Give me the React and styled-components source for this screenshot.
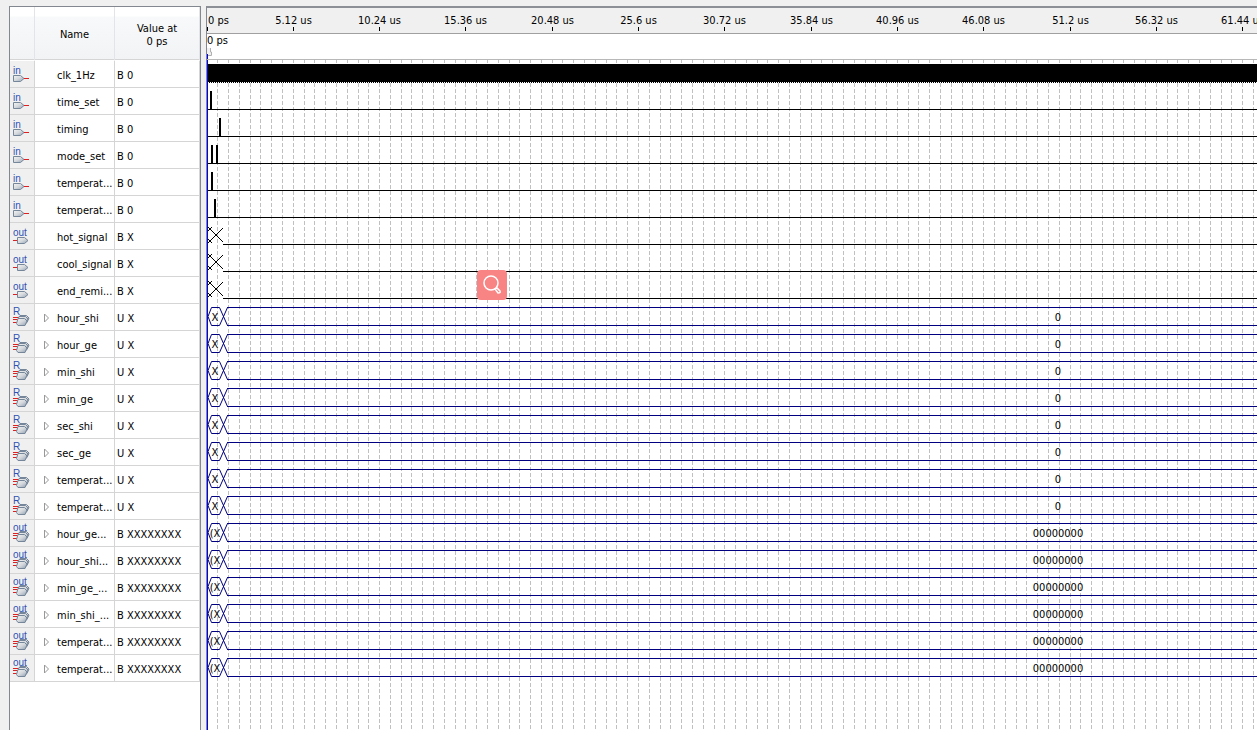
import React from "react";
import styled, { createGlobalStyle } from "styled-components";

const GlobalStyle = createGlobalStyle`
  body {
    margin: 0;
    background-color: #f0f0f0;
  }
`;

const FONT = `"DejaVu Sans Condensed", "DejaVu Sans", sans-serif`;

// distance between two labelled ticks, in pixels
const TICK = 86.3;
const GRID_STEP = TICK / 8;
const VALUE_X = 851;

const signals = [
  { name: "clk_1Hz", value: "B 0", icon: "in", wave: "clock" },
  { name: "time_set", value: "B 0", icon: "in", wave: "pulse", pulses: [3] },
  { name: "timing", value: "B 0", icon: "in", wave: "pulse", pulses: [12] },
  { name: "mode_set", value: "B 0", icon: "in", wave: "pulse", pulses: [4, 9] },
  { name: "temperat...", value: "B 0", icon: "in", wave: "pulse", pulses: [4] },
  { name: "temperat...", value: "B 0", icon: "in", wave: "pulse", pulses: [7] },
  { name: "hot_signal", value: "B X", icon: "out", wave: "unknown" },
  { name: "cool_signal", value: "B X", icon: "out", wave: "unknown" },
  { name: "end_remi...", value: "B X", icon: "out", wave: "unknown" },
  { name: "hour_shi", value: "U X", icon: "R", wave: "bus", data: "0" },
  { name: "hour_ge", value: "U X", icon: "R", wave: "bus", data: "0" },
  { name: "min_shi", value: "U X", icon: "R", wave: "bus", data: "0" },
  { name: "min_ge", value: "U X", icon: "R", wave: "bus", data: "0" },
  { name: "sec_shi", value: "U X", icon: "R", wave: "bus", data: "0" },
  { name: "sec_ge", value: "U X", icon: "R", wave: "bus", data: "0" },
  { name: "temperat...", value: "U X", icon: "R", wave: "bus", data: "0" },
  { name: "temperat...", value: "U X", icon: "R", wave: "bus", data: "0" },
  { name: "hour_ge...", value: "B XXXXXXXX", icon: "outBus", wave: "bus", data: "00000000" },
  { name: "hour_shi...", value: "B XXXXXXXX", icon: "outBus", wave: "bus", data: "00000000" },
  { name: "min_ge_...", value: "B XXXXXXXX", icon: "outBus", wave: "bus", data: "00000000" },
  { name: "min_shi_...", value: "B XXXXXXXX", icon: "outBus", wave: "bus", data: "00000000" },
  { name: "temperat...", value: "B XXXXXXXX", icon: "outBus", wave: "bus", data: "00000000" },
  { name: "temperat...", value: "B XXXXXXXX", icon: "outBus", wave: "bus", data: "00000000" },
];

const ticks = [
  "5.12 us", "10.24 us", "15.36 us", "20.48 us", "25.6 us", "30.72 us",
  "35.84 us", "40.96 us", "46.08 us", "51.2 us", "56.32 us", "61.44 us",
];

const Page = styled.div`
  display: flex;
  gap: 5px;
  min-height: 100vh;
  box-sizing: border-box;
  padding: 6px 0 0 9px;
  overflow: hidden;
  color: #000;
  font-family: ${FONT};
  font-size: 11px;
  line-height: 13px;
`;

const SignalPanel = styled.section`
  flex: none;
  border: 1px solid #828790;
  border-bottom: none;
  background-color: #fff;
`;

const SignalTable = styled.table`
  table-layout: fixed;
  width: 190px;
  border-collapse: separate;
  border-spacing: 0;
`;

const HeadCell = styled.th`
  box-sizing: border-box;
  width: ${(props) => props.$width};
  height: 54px;
  padding: 2px 0 0;
  border-right: 1px solid #e2e4e8;
  border-bottom: 1px solid #fff;
  background: linear-gradient(#fff 0 9px, #f8f9fa 10px, #f2f3f5);
  box-shadow: inset 0 -1px #d5d5d5;
  font-weight: normal;
  text-align: center;
`;

const Cell = styled.td`
  box-sizing: border-box;
  height: 27px;
  padding: 2px 0 0 2px;
  border-right: 1px solid #d5d5d5;
  border-bottom: 1px solid #d5d5d5;
  white-space: nowrap;
`;

const IconCell = styled(Cell)`
  padding: 0;
  background-color: #f0f0f0;
`;

const NameBox = styled.div`
  display: flex;
  align-items: center;
`;

const ExpandButton = styled.button`
  display: flex;
  width: 20px;
  height: 13px;
  padding: 1px 0 0 6px;
  border: none;
  background: none;
`;

const NoExpand = styled.span`
  width: 20px;
`;

const WavePanel = styled.section`
  flex: 1;
  min-width: 0;
  display: flex;
  flex-direction: column;
  border-top: 2px solid #8c9096;
  border-left: 1px solid #828790;
  background-color: #fff;
`;

const Ruler = styled.div`
  height: 25px;
  border-bottom: 1px solid #a0a0a0;
  background-color: #f0f0f0;
`;

const CursorBar = styled.div`
  height: 25px;
  border-bottom: 1px solid #b8b8b8;
`;

const WaveArea = styled.div`
  position: relative;
  flex: 1;
  padding-top: 1px;
`;

const Drawing = styled.svg`
  display: block;
  width: 100%;
  height: ${(props) => props.$height || "100%"};
  overflow: hidden;
  font-family: ${FONT};
  font-size: 11px;
`;

const GridLayer = styled(Drawing)`
  position: absolute;
  inset: 0;
  pointer-events: none;
`;

const WaveRows = styled.div`
  position: relative;
`;

const SearchButton = styled.button`
  position: absolute;
  top: 210px;
  left: 270px;
  width: 30px;
  height: 30px;
  padding: 0;
  border: none;
  border-radius: 4px;
  background-color: #f98484;
`;

const IconSvg = styled.svg`
  display: block;
  font-family: "Liberation Sans", sans-serif;
  font-size: 10px;
`;

const Tag = ({ x, y, d }) => (
  <path
    transform={`translate(${x} ${y})`}
    d={d}
    fill="url(#tag)"
    stroke="#75869a"
  />
);

const PinIcon = ({ type }) => {
  const label = type === "outBus" ? "out" : type;
  const single = "M.5.5H7.5L11 3.5 7.5 6.5H.5z";
  const stacked = "M2 .5H8.5L11 3 9 7.5H2L.5 5.5z";
  return (
    <IconSvg width="24" height="26" aria-hidden="true">
      {type === "in" && (
        <>
          <Tag x={3} y={14} d={single} />
          <path d="M14 17.5h5" stroke="#e02020" />
        </>
      )}
      {type === "out" && (
        <>
          <path d="M3 17.5h4" stroke="#e02020" />
          <Tag x={7} y={14} d={single} />
        </>
      )}
      {(type === "R" || type === "outBus") && (
        <>
          <path d="M3 13.5h6M3 15.5h5M3 18.5h4" stroke="#e02020" />
          <Tag x={8} y={11} d={stacked} />
          <Tag x={7} y={12} d={stacked} />
          <Tag x={6} y={14} d={stacked} />
        </>
      )}
      <text x="3" y={type === "in" || type === "out" ? 13 : 11} fill="#3152b0">
        {label}
      </text>
    </IconSvg>
  );
};

const Wave = ({ signal }) => (
  <Drawing $height="27px" stroke="#000" shapeRendering="crispEdges">
    {signal.wave === "clock" && (
      <>
        <rect y="3" width="100%" height="18" stroke="none" fill="#000" />
        <line y1="21.5" x2="100%" y2="21.5" strokeDasharray="1 1" />
      </>
    )}
    {signal.wave === "pulse" && (
      <>
        <line y1="21.5" x2="100%" y2="21.5" />
        {signal.pulses.map((x) => (
          <line key={x} x1={x + 1} x2={x + 1} y1="3" y2="21" strokeWidth="2" />
        ))}
      </>
    )}
    {signal.wave === "unknown" && (
      <>
        <path d="M1 4L16 19M1 20L16 5M1 8L5 4M1 16L5 20" fill="none" />
        <line x1="16" y1="21.5" x2="100%" y2="21.5" />
      </>
    )}
    {signal.wave === "bus" && (
      <>
        <g stroke="#000080" fill="none">
          <path
            d="M1 12.5L4.5 3.5H12.5L20.5 21.5M1 12.5L4.5 21.5H12.5L20.5 3.5"
            shapeRendering="auto"
          />
          <line x1="20" y1="3.5" x2="100%" y2="3.5" />
          <line x1="20" y1="21.5" x2="100%" y2="21.5" />
        </g>
        <g stroke="none" textAnchor="middle">
          <text x="8" y="17">{signal.data === "0" ? "X" : "(X"}</text>
          <text x={VALUE_X} y="17">{signal.data}</text>
        </g>
      </>
    )}
  </Drawing>
);

const Grid = () => (
  <GridLayer stroke="#c0c0c0" strokeDasharray="4 2">
    {Array.from({ length: 360 }, (_, i) => {
      const x = Math.floor((i + 1) * GRID_STEP) + 0.5;
      return <line key={i} x1={x} x2={x} y1="-1" y2="100%" />;
    })}
  </GridLayer>
);

const App = () => {
  return (
    <Page>
      <GlobalStyle />
      <SignalPanel>
        <SignalTable>
          <thead>
            <tr>
              <HeadCell $width="25px" />
              <HeadCell $width="80px">Name</HeadCell>
              <HeadCell $width="85px">
                Value at
                <br />0 ps
              </HeadCell>
            </tr>
          </thead>
          <tbody>
            {signals.map((signal, index) => (
              <tr key={index}>
                <IconCell>
                  <PinIcon type={signal.icon} />
                </IconCell>
                <Cell>
                  <NameBox>
                    {signal.wave === "bus" ? (
                      <ExpandButton aria-label={`Expand ${signal.name}`}>
                        <svg width="7" height="10">
                          <path d="M1.5 1v8L5.5 5z" fill="#fff" stroke="#989898" />
                        </svg>
                      </ExpandButton>
                    ) : (
                      <NoExpand />
                    )}
                    {signal.name}
                  </NameBox>
                </Cell>
                <Cell>{signal.value}</Cell>
              </tr>
            ))}
          </tbody>
        </SignalTable>
      </SignalPanel>

      <WavePanel>
        <Ruler>
          <Drawing textAnchor="middle">
            <defs>
              <linearGradient id="tag" x2="1" y2="1">
                <stop offset="0" stopColor="#f4f4f4" />
                <stop offset="0.5" stopColor="#d4d8dc" />
                <stop offset="1" stopColor="#8c9cb0" />
              </linearGradient>
            </defs>
            <text x="1" y="16" textAnchor="start">0 ps</text>
            <path d="M.5 19v4" stroke="#000" />
            {ticks.map((label, index) => {
              const x = Math.floor((index + 1) * TICK) + 0.5;
              return (
                <g key={label}>
                  <text x={x} y="16">{label}</text>
                  <path d={`M${x} 19v4`} stroke="#000" />
                </g>
              );
            })}
          </Drawing>
        </Ruler>
        <CursorBar>
          <Drawing>
            <text x="0" y="10">0 ps</text>
            <path d="M0 14h3v4h2v3H0z" fill="#f0f0f0" />
            <path d="M3.5 14v4h1v3.5H0" fill="none" stroke="#b0b0b0" />
            <path d="M.5 20v5" stroke="#0000ff" />
          </Drawing>
        </CursorBar>
        <WaveArea>
          <Grid />
          <WaveRows>
            {signals.map((signal, index) => (
              <Wave key={index} signal={signal} />
            ))}
          </WaveRows>
          <GridLayer>
            <line x1="0.5" x2="0.5" y1="0" y2="100%" stroke="#0000ff" />
          </GridLayer>
          <SearchButton aria-label="Search">
            <svg width="30" height="30" fill="none" stroke="#fff">
              <circle cx="14" cy="13" r="7" strokeWidth="1.5" />
              <path d="M18 19l2-1 3 3q1 2-2 2z" strokeWidth="1.5" />
            </svg>
          </SearchButton>
        </WaveArea>
      </WavePanel>
    </Page>
  );
};

export default App;
